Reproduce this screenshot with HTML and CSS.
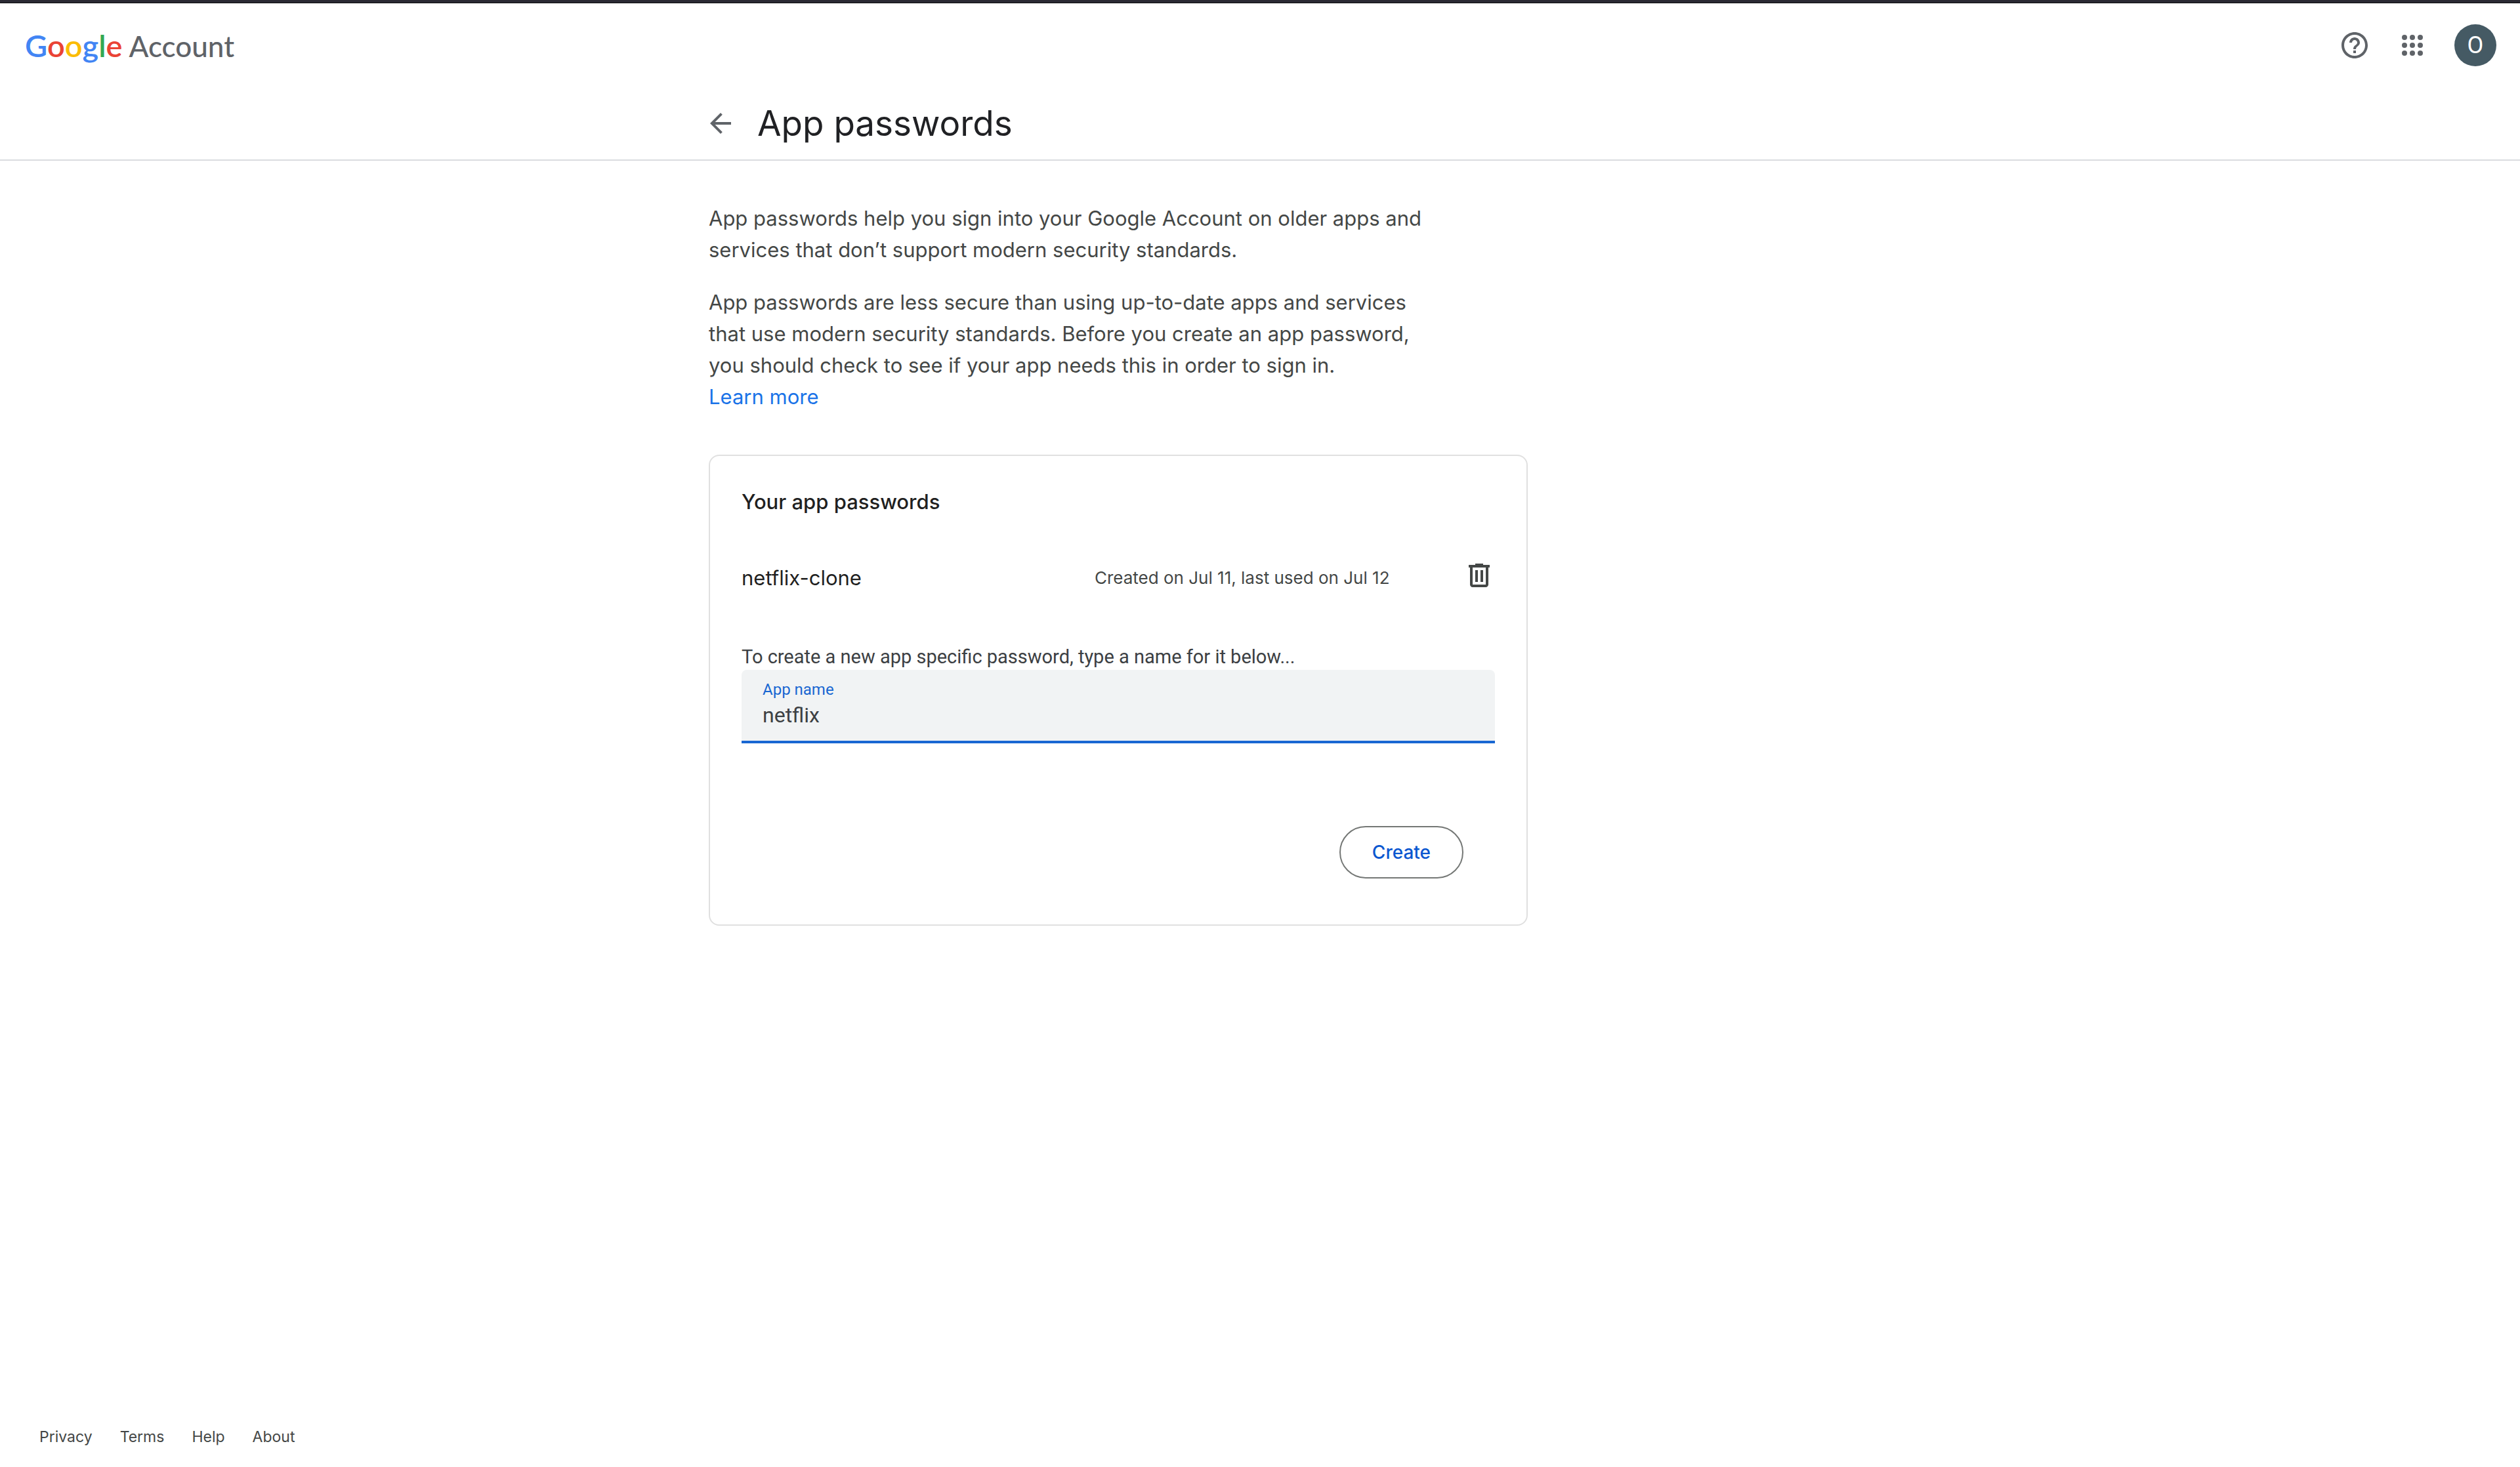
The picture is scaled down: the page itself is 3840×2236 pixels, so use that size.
FILE: index.html
```html
<!DOCTYPE html>
<html lang="en">
<head>
<meta charset="utf-8">
<meta name="viewport" content="width=device-width, initial-scale=1">
<title>App passwords</title>
<link rel="stylesheet" href="styles.css">
</head>
<body>
<header class="topbar">
  <a class="brand" href="#" aria-label="Google Account">
    <span class="brand-google"><span class="blue">G</span><span class="red">o</span><span class="yellow">o</span><span class="blue">g</span><span class="green">l</span><span class="red">e</span></span>
    <span class="brand-product">Account</span>
  </a>
  <div class="actions">
    <button class="icon-button" type="button" aria-label="Help">
      <svg class="icon" viewBox="0 0 24 24"><path d="M11 18h2v-2h-2v2zm1-16C6.480 2 2 6.480 2 12s4.480 10 10 10 10-4.480 10-10S17.520 2 12 2zm0 18c-4.410 0-8-3.590-8-8s3.590-8 8-8 8 3.590 8 8-3.590 8-8 8zm0-14c-2.210 0-4 1.790-4 4h2c0-1.100.9-2 2-2s2 .9 2 2c0 2-3 1.750-3 5h2c0-2.250 3-2.500 3-5 0-2.210-1.790-4-4-4z"/></svg>
    </button>
    <button class="icon-button" type="button" aria-label="Google apps">
      <svg class="icon" viewBox="0 0 24 24"><circle cx="6" cy="6" r="2"/><circle cx="12" cy="6" r="2"/><circle cx="18" cy="6" r="2"/><circle cx="6" cy="12" r="2"/><circle cx="12" cy="12" r="2"/><circle cx="18" cy="12" r="2"/><circle cx="6" cy="18" r="2"/><circle cx="12" cy="18" r="2"/><circle cx="18" cy="18" r="2"/></svg>
    </button>
    <button class="avatar" type="button">O</button>
  </div>
</header>
<div class="titlebar">
  <div class="container titlebar-inner">
    <a class="back" href="#" aria-label="Back">
      <svg class="icon-back" viewBox="0 0 16 16"><path d="M16 7H3.830l5.590-5.590L8 0 0 8l8 8 1.410-1.410L3.830 9H16V7z"/></svg>
    </a>
    <h1 class="title">App passwords</h1>
  </div>
</div>
<main class="container content">
  <div class="intro">
    <p>App passwords help you sign into your Google Account on older apps and<br>services that don’t support modern security standards.</p>
    <p>App passwords are less secure than using up-to-date apps and services<br>that use modern security standards. Before you create an app password,<br>you should check to see if your app needs this in order to sign in.<br><a class="learn-more" href="#">Learn more</a></p>
  </div>
  <section class="card">
    <h2 class="card-title">Your app passwords</h2>
    <ul class="passwords">
      <li class="password">
        <span class="password-name">netflix-clone</span>
        <span class="password-date">Created on Jul 11, last used on Jul 12</span>
        <button class="icon-button delete" type="button" aria-label="Delete netflix-clone">
          <svg class="icon" viewBox="0 0 24 24"><path d="M15 4V3H9v1H4v2h1v13c0 1.100.9 2 2 2h10c1.100 0 2-.9 2-2V6h1V4h-5zm2 15H7V6h10v13zM9 8h2v9H9zm4 0h2v9h-2z"/></svg>
        </button>
      </li>
    </ul>
    <form class="create-form">
      <p class="hint">To create a new app specific password, type a name for it below...</p>
      <div class="field">
        <label class="field-label" for="app-name">App name</label>
        <input class="field-input" id="app-name" type="text" value="netflix" autocomplete="off" spellcheck="false">
      </div>
      <div class="form-actions">
        <button class="create" type="button">Create</button>
      </div>
    </form>
  </section>
</main>
<footer class="footer">
  <a href="#">Privacy</a>
  <a href="#">Terms</a>
  <a href="#">Help</a>
  <a href="#">About</a>
</footer>
</body>
</html>
```
FILE: styles.css
```css
* {
  box-sizing: border-box;
}

body {
  margin: 0;
  min-height: 100vh;
  display: flex;
  flex-direction: column;
  border-top: 4px solid #2b2a33;
  background: #fff;
  color: #444746;
  font-family: Inter, "Noto Sans", sans-serif;
  font-size: 31px;
  line-height: 48px;
}

h1, h2, p, ul {
  margin: 0;
  padding: 0;
  font-weight: 400;
}

a {
  color: inherit;
  text-decoration: none;
}

button {
  padding: 0;
  border: 0;
  background: none;
  font: inherit;
  cursor: pointer;
}

.topbar {
  height: 129px;
  display: flex;
  align-items: center;
  justify-content: space-between;
  padding: 0 36px 0 38px;
  border-top: 1px solid #0c0c0d;
}

.brand {
  display: flex;
  align-items: baseline;
  gap: 10px;
  font-family: Lato, sans-serif;
}

.brand-google {
  font-size: 47px;
  font-weight: 600;
}

.brand-product {
  font-size: 44px;
  font-weight: 500;
  color: #5f6368;
}

.blue { color: #4285f4; }
.red { color: #ea4335; }
.yellow { color: #fbbc04; }
.green { color: #34a853; }

.actions {
  display: flex;
  align-items: center;
  gap: 40px;
}

.icon-button {
  display: flex;
  color: #5f6368;
}

.icon {
  width: 48px;
  height: 48px;
  fill: currentColor;
}

.avatar {
  width: 64px;
  height: 64px;
  border-radius: 50%;
  background: #455a64;
  color: #fff;
  font-family: Roboto, sans-serif;
  font-size: 36px;
}

.container {
  width: 100%;
  max-width: 1680px;
  margin: 0 auto;
}

.titlebar {
  border-bottom: 2px solid #dadce0;
}

.titlebar-inner {
  height: 110px;
  display: flex;
  align-items: center;
  gap: 40px;
}

.back {
  display: flex;
  padding-left: 2px;
  color: #5f6368;
}

.icon-back {
  width: 32px;
  height: 32px;
  fill: currentColor;
}

.title {
  color: #202124;
  font-size: 53px;
  line-height: 72px;
}

.content {
  flex: 1;
  padding-top: 64px;
}

.intro {
  display: flex;
  flex-direction: column;
  gap: 32px;
}

.learn-more {
  color: #1a73e8;
}

.card {
  max-width: 1248px;
  margin-top: 64px;
  padding: 46px 48px 70px;
  border: 2px solid #e0e0e0;
  border-radius: 16px;
}

.card-title {
  color: #1f1f1f;
  font-size: 31px;
  font-weight: 500;
}

.passwords {
  margin-top: 44px;
  list-style: none;
}

.password {
  height: 96px;
  display: flex;
  align-items: center;
}

.password-name {
  flex: 1;
  color: #1f1f1f;
}

.password-date {
  width: 562px;
  font-size: 26px;
}

.delete {
  padding-bottom: 8px;
  color: #444746;
}

.create-form {
  margin-top: 52px;
  font-family: Roboto, sans-serif;
  color: #3c4043;
}

.hint {
  font-size: 29px;
  line-height: 40px;
}

.field {
  display: flex;
  flex-direction: column;
  height: 112px;
  padding: 14px 32px 0;
  border-bottom: 4px solid #1967d2;
  border-radius: 8px 8px 0 0;
  background: #f1f3f4;
}

.field-label {
  color: #1967d2;
  font-size: 24px;
  line-height: 32px;
}

.field-input {
  width: 100%;
  height: 46px;
  padding: 0;
  border: 0;
  outline: 0;
  background: none;
  color: #3c4043;
  font-family: inherit;
  font-size: 32px;
  line-height: 46px;
}

.form-actions {
  display: flex;
  justify-content: flex-end;
  padding: 126px 48px 0;
}

.create {
  height: 80px;
  padding: 0 48px;
  border: 2px solid #747775;
  border-radius: 40px;
  color: #0b57d0;
  font-family: Inter, sans-serif;
  font-size: 28px;
  font-weight: 500;
}

.footer {
  display: flex;
  gap: 42px;
  padding: 0 60px 22px;
  font-size: 23px;
}
```
